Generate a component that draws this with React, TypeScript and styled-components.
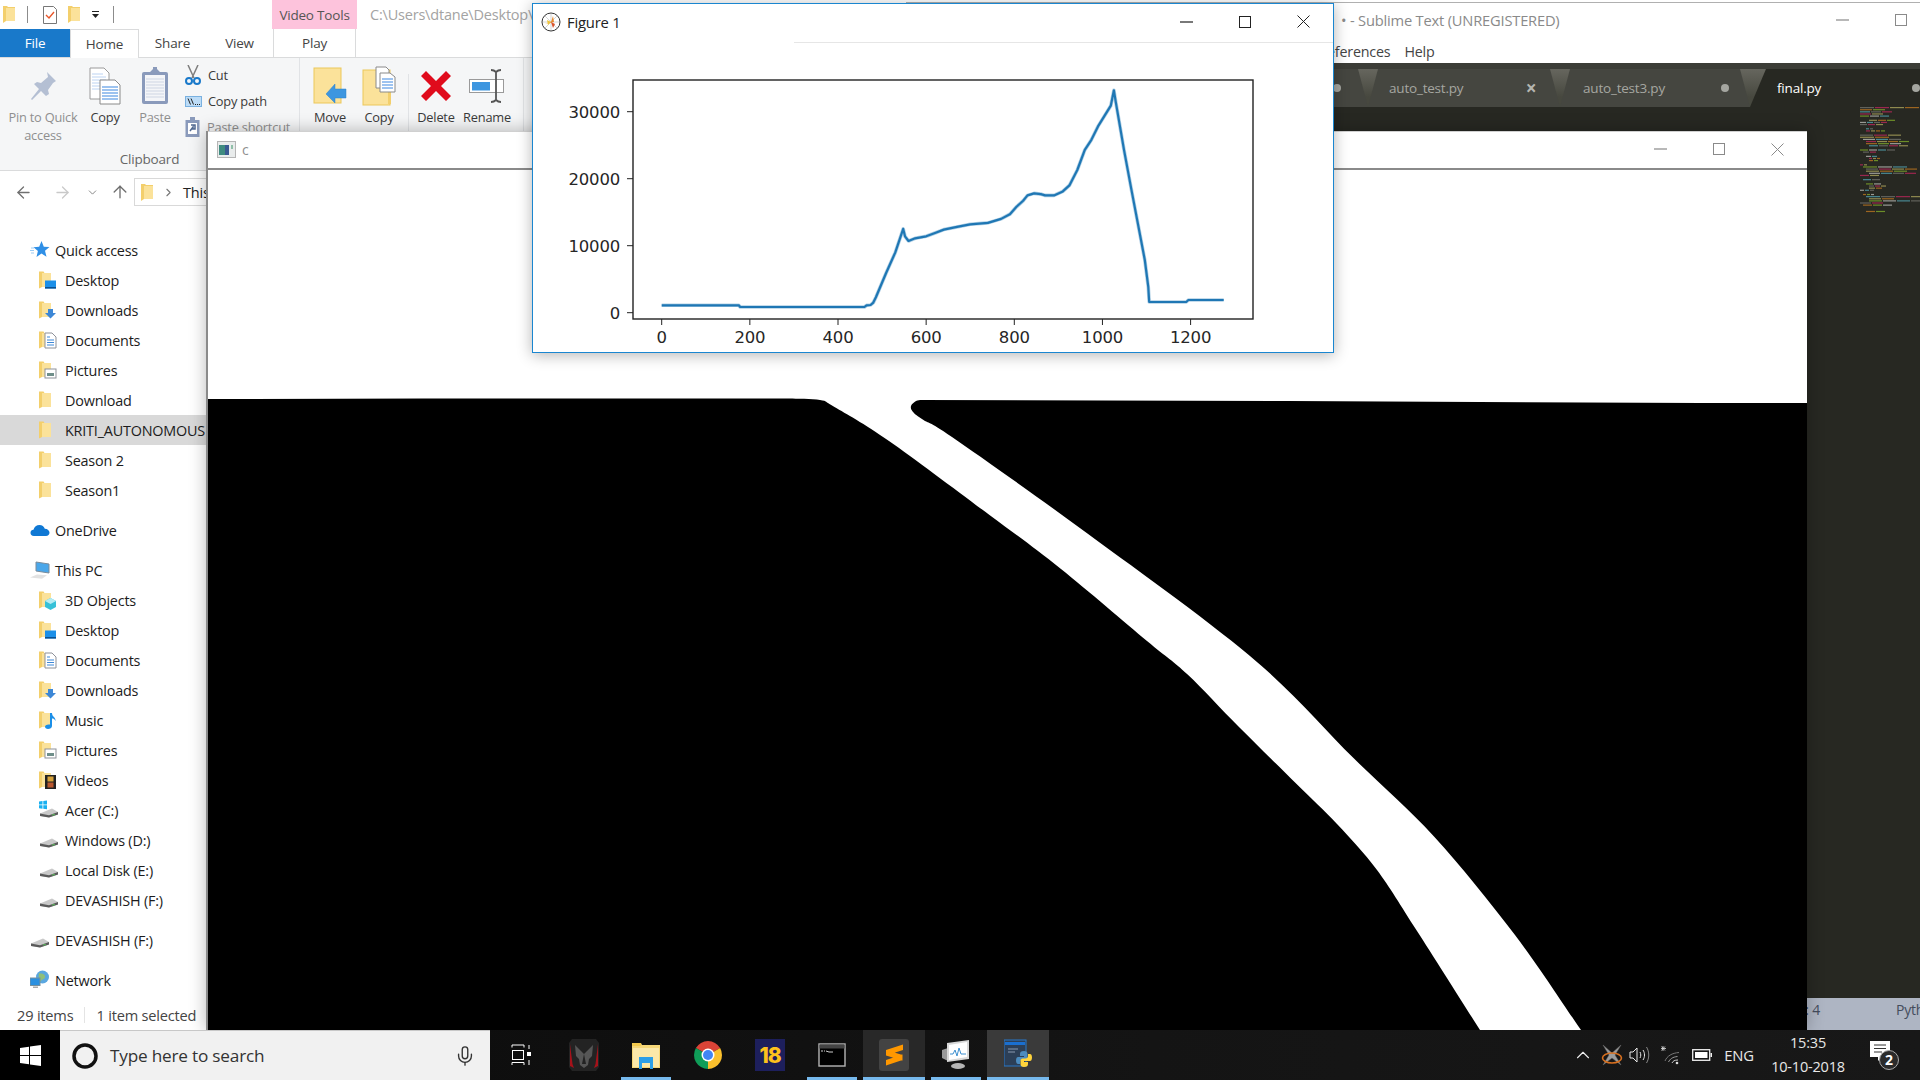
import React from "react";
import styled, { createGlobalStyle } from "styled-components";
import { ArrowLeft, ArrowRight, ArrowUp, ChevronDown, ChevronRight, ChevronUp, Mic } from "lucide-react";

const Global = createGlobalStyle`
  html, body { margin: 0; padding: 0; background: #000; }
  * { box-sizing: border-box; }
  #root { width: 1920px; height: 1080px; overflow: hidden; }
`;

const UI = `"Open Sans", "Noto Sans", sans-serif`;

const Screen = styled.div`
  width: 1920px; height: 1080px; display: flex; flex-direction: column; overflow: hidden;
  font-family: ${UI}; letter-spacing: -0.2px;
`;
const Desktop = styled.div`position: relative; flex: 1; overflow: hidden; background: #fff;`;

/* ------ Explorer ------ */
const Explorer = styled.section`
  position: absolute; left: 0; top: 0; width: 900px; height: 1030px;
  display: flex; flex-direction: column; background: #fff; z-index: 1;
`;
const ExplorerTitle = styled.div`height: 29px; display: flex; align-items: stretch; flex: none;`;
const Qat = styled.div`width: 272px; display: flex; align-items: center; padding-left: 3px;`;
const QatSep = styled.i`width: 1px; height: 17px; background: #8c8c8c; margin: 0 15px 0 11px;`;
const QatSep2 = styled(QatSep)`margin: 0 0 0 14px;`;
const QatGap = styled.span`width: 11px; flex: none;`;
const ContextLabel = styled.div`
  width: 85px; background: #fdc3dc; color: #555; font-size: 13.5px;
  display: flex; align-items: center; justify-content: center;
`;
const PathText = styled.div`
  margin-left: 13px; width: 162px; overflow: hidden; color: #a3a3a3; font-size: 14.5px; line-height: 29px; white-space: nowrap;
`;
const RibbonTabs = styled.div`
  height: 29px; display: flex; flex: none; border-bottom: 1px solid #dadbdc;
`;
const RTab = styled.div<{ $w: number; $kind?: "file" | "home" | "ctx" }>`
  width: ${(p) => p.$w}px; height: ${(p) => (p.$kind === "home" ? 29 : 28)}px;
  display: flex; align-items: center; justify-content: center; font-size: 13.5px; color: #444;
  ${(p) => p.$kind === "file" && "background:#1979ca;color:#fff;"}
  ${(p) => p.$kind === "home" && "border:1px solid #dadbdc;border-bottom:none;background:#fff;"}
  ${(p) => p.$kind === "ctx" && "border-left:1px solid #dadbdc;border-right:1px solid #dadbdc;"}
`;
const Ribbon = styled.div`
  height: 113px; flex: none; background: #f5f6f7; border-bottom: 1px solid #dadbdc; display: flex; overflow: hidden;
`;
const RGroup = styled.div<{ $w: number }>`
  width: ${(p) => p.$w}px; flex: none; display: flex; flex-direction: column; height: 100%;
  border-right: 1px solid #e1e3e6;
`;
const RItems = styled.div`flex: 1; display: flex; min-height: 0;`;
const RLabel = styled.div`
  flex: none; height: 22px; text-align: center; font-size: 13.5px; color: #666; line-height: 22px;
`;
const RBtn = styled.div<{ $w: number; $dim?: boolean }>`
  width: ${(p) => p.$w}px; flex: none; display: flex; flex-direction: column; align-items: center;
  font-size: 12.8px; line-height: 18px; text-align: center;
  color: ${(p) => (p.$dim ? "#8f8f8f" : "#3a3a3a")};
`;
const RIcon = styled.div`
  height: 50px; padding-top: 5px; display: flex; align-items: center; justify-content: center; flex: none;
`;
const RSmallCol = styled.div`display: flex; flex-direction: column; padding: 4px 0 0 3px;`;
const RSmall = styled.div<{ $dim?: boolean }>`
  height: 26px; display: flex; align-items: center; gap: 6px; font-size: 12.8px; white-space: nowrap;
  color: ${(p) => (p.$dim ? "#8f8f8f" : "#3a3a3a")};
`;
const RDivider = styled.i`width: 1px; height: 60px; margin: 16px 1px 0 6px; background: #e1e3e6; flex: none;`;

const AddressRow = styled.div`height: 64px; flex: none; display: flex; align-items: flex-start; padding-top: 7px;`;
const NavCell = styled.div<{ $w: number; $c: string }>`
  width: ${(p) => p.$w}px; height: 28px; display: flex; align-items: center; justify-content: center; color: ${(p) => p.$c};
`;
const AddressBox = styled.div`
  width: 400px; height: 28px; border: 1px solid #d9d9d9; display: flex; align-items: center; gap: 8px;
  padding-left: 6px; font-size: 14.5px; color: #222;
`;
const NavList = styled.nav`flex: 1; display: flex; flex-direction: column; min-height: 0;`;
const NavRow = styled.div<{ $level: 1 | 2; $sel?: boolean; $gap?: boolean }>`
  height: 30px; flex: none; display: flex; align-items: center; white-space: nowrap;
  font-size: 14.4px; color: #1c1c1c;
  padding-left: ${(p) => (p.$level === 1 ? 30 : 39)}px;
  margin-top: ${(p) => (p.$gap ? 10 : 0)}px;
  background: ${(p) => (p.$sel ? "#d9d9d9" : "transparent")};
`;
const NavIcon = styled.span<{ $level: 1 | 2 }>`
  width: ${(p) => (p.$level === 1 ? 25 : 26)}px; height: 20px; flex: none; display: block;
`;
const StatusRow = styled.footer`
  height: 30px; flex: none; display: flex; align-items: center; padding-left: 17px; font-size: 14.6px; color: #444;
`;
const StatusSep = styled.i`width: 1px; height: 16px; background: #e4e4e4; margin: 0 11px 0 11px;`;

/* ------ Sublime ------ */
const Sublime = styled.section`
  position: absolute; left: 906px; top: 2px; width: 1083px; height: 1028px;
  display: flex; flex-direction: column; background: #fff; border-top: 1px solid #b0b0b0; z-index: 2;
`;
const SubTitle = styled.div`height: 34px; flex: none; display: flex; align-items: center; padding-left: 435px;`;
const SubTitleText = styled.div`font-size: 14.7px; color: #8a8a8a; flex: 1; white-space: nowrap;`;
const SubMenu = styled.div`
  height: 26px; padding-top: 2px; flex: none; display: flex; align-items: center; gap: 14px; padding-left: 407px;
  font-size: 14.3px; color: #444;
`;
const TabStrip = styled.div`
  height: 44px; flex: none; padding: 6px 0 0 262px; display: flex; align-items: stretch;
  background: linear-gradient(#3c3d37 0 6px, #66665e 6px, #47483f 34px);
`;
const STab = styled.div<{ $w: number; $active?: boolean; $pl: number; $pr: number }>`
  width: ${(p) => p.$w}px; flex: none; display: flex; align-items: center; justify-content: space-between;
  padding: 0 ${(p) => p.$pr}px 0 ${(p) => p.$pl}px; font-size: 13.5px;
  background: ${(p) => (p.$active ? "#272822" : "#454640")};
  color: ${(p) => (p.$active ? "#fff" : "#a5a6a0")};
  clip-path: polygon(0 100%, ${(p) => (p.$active ? 16 : 10)}px 0, calc(100% - 10px) 0, 100% 100%);
`;
const SDot = styled.i`width: 8px; height: 8px; border-radius: 50%; background: #a5a6a0; flex: none;`;
const SClose = styled.span`font-size: 19px; font-weight: 700; color: #b5b6b0; width: 12px; text-align: center; line-height: 1;`;
const Editor = styled.div`flex: 1; background: #272822; display: flex; padding-left: 954px; align-items: flex-start; min-height: 0;`;
const SubStatus = styled.div`
  height: 32px; flex: none; background: #aeb5c3; display: flex; align-items: flex-start; padding-top: 2px;
  font-size: 14px; color: #444c5c;
`;
const SubStatusLeft = styled.span`width: 914px; text-align: right;`;
const SubStatusRight = styled.span`margin-left: 76px;`;

/* ------ Generic window bits ------ */
const Controls = styled.div`display: flex; flex: none;`;
const Ctl = styled.div`width: 58.5px; display: flex; align-items: center; justify-content: center;`;

/* ------ cv window ------ */
const CvWindow = styled.section`
  position: absolute; left: 206px; top: 131px; width: 1601px; height: 899px; background: #fff; z-index: 3;
  display: flex; flex-direction: column; border-left: 2px solid #8a8a8a;
  box-shadow: 0 0 16px rgba(0,0,0,.28);
`;
const CvTitle = styled.div`
  height: 39px; flex: none; display: flex; align-items: center; padding: 0 0 2px 9px; gap: 6px;
  border-bottom: 2px solid #8a8a8a; border-top: 1px solid #d0d0d0; font-size: 14px; color: #8f8f8f;
`;
const Grow = styled.div`flex: 1;`;
const CanvasSvg = styled.svg`display: block; flex: 1; width: 1599px; height: 860px;`;

/* ------ figure ------ */
const FigureWindow = styled.section`
  position: absolute; left: 532px; top: 3px; width: 802px; height: 350px; background: #fff; z-index: 4;
  border: 1px solid #1a86d0; display: flex; flex-direction: column;
  box-shadow: 0 2px 14px rgba(0,0,0,.3);
`;
const FigTitle = styled.div`
  height: 39px; flex: none; display: flex; align-items: center; padding: 0 0 4px 8px; gap: 6px;
  font-size: 14.8px; color: #222; position: relative;
`;
const FigRule = styled.i`position: absolute; left: 261px; right: 0; bottom: 0; height: 1px; background: #e6e6e6;`;
const ChartSvg = styled.svg`display: block; width: 800px; height: 309px; flex: none;`;

/* ------ taskbar ------ */
const Taskbar = styled.footer`
  height: 50px; flex: none; display: flex; background: linear-gradient(90deg,#0a0a0a,#141414 60%,#181818); color: #fff;
  position: relative; z-index: 6;
`;
const Start = styled.div`width: 60px; display: flex; align-items: center; justify-content: center; background: #000; flex: none;`;
const Search = styled.div`
  width: 430px; flex: none; background: #f1f1f1; border-top: 1px solid #c8c8c8; display: flex; align-items: center;
  padding: 0 14px 0 11px; gap: 11px; color: #333; font-size: 17.2px;
`;
const SearchText = styled.div`flex: 1;`;
const TaskView = styled.div`width: 63px; flex: none; display: flex; align-items: center; justify-content: center;`;
const TaskCell = styled.div<{ $run?: boolean; $bg?: string }>`
  width: 62px; flex: none; position: relative; display: flex; align-items: center; justify-content: center;
  background: ${(p) => p.$bg ?? "transparent"};
  &::after {
    content: ""; display: ${(p) => (p.$run ? "block" : "none")}; position: absolute; bottom: 0;
    left: ${(p) => (p.$bg ? 0 : 6)}px; right: ${(p) => (p.$bg ? 0 : 6)}px; height: 3px; background: #76b9ed;
  }
`;
const Tray = styled.div`margin-left: auto; width: 352px; flex: none; display: flex; align-items: stretch;`;
const TrayCell = styled.div<{ $w: number }>`
  width: ${(p) => p.$w}px; flex: none; display: flex; align-items: center; justify-content: center;
  font-size: 14.8px; color: #e8e8e8;
`;
const Clock = styled.div`
  width: 96px; flex: none; display: flex; flex-direction: column; align-items: center; justify-content: center;
  font-size: 14.5px; line-height: 24px; color: #e8e8e8;
`;
const Notif = styled.div`width: 64px; flex: none; display: flex; align-items: center; padding-left: 13px;`;
const EighteenBox = styled.div`
  width: 30px; height: 32px; background: #1d1f5c; color: #fdc21c; display: flex; align-items: center; justify-content: center;
  font: 800 21px "Inter", "Liberation Sans", sans-serif; letter-spacing: -1px;
`;

/* ------ icons ------ */
type Ov = "none" | "desktop" | "down" | "doc" | "pic" | "cube" | "music" | "film";
const Overlay = ({ k }: { k: Ov }) => {
  switch (k) {
    case "desktop":
      return (<g><rect x="6" y="10.5" width="11" height="8" fill="#1b8fe8" /><rect x="6" y="17" width="11" height="1.5" fill="#0b4f8e" /></g>);
    case "down":
      return (<path d="M9 9h5v4h3l-5.500 5.500L6 13h3z" fill="#3d87d6" />);
    case "doc":
      return (<g><path d="M6 3h7l4 4v11H6z" fill="#fff" stroke="#8e9199" /><path d="M8 7h3M8 10h7M8 12.500h7M8 15h7" stroke="#3d87d6" /></g>);
    case "pic":
      return (<g><rect x="6" y="9" width="11" height="9" fill="#fff" stroke="#8e9199" /><path d="M8 13h7v3H8z" fill="#6f8f8a" /></g>);
    case "cube":
      return (<g><path d="M11.500 8l5.500 3v6l-5.500 3L6 17v-6z" fill="#37c1d8" /><path d="M6 11l5.500 3 5.500-3-5.500-3z" fill="#b6ecf3" /></g>);
    case "music":
      return (<path d="M11 3h2c0 4 4 4 3.500 8-1-2-2-2.500-3.500-2.500V16c0 2-2 3-4 3s-3-1-3-2.200S7.500 14 11 14.500z" fill="#1b8fe8" />);
    case "film":
      return (<g><rect x="6" y="5" width="11" height="14" fill="#222" /><rect x="8.500" y="6.500" width="6" height="5" fill="#d7a23a" /><rect x="8.500" y="12.500" width="6" height="5" fill="#b9572f" /></g>);
    default:
      return null;
  }
};
const Folder = ({ k = "none" }: { k?: Ov }) => (
  <svg width="20" height="20" viewBox="0 0 20 20" style={{ display: "block" }}>
    <path d="M0 1.500h4.500L5.500 3H12v14H3l-3 1.500z" fill="#f3cf6c" />
    <path d="M3 3h9v14H3z" fill="#fbe29a" />
    <Overlay k={k} />
  </svg>
);
const Drive = ({ win }: { win?: boolean }) => (
  <svg width="20" height="20" viewBox="0 0 20 20" style={{ display: "block" }}>
    <path d="M1 13.500L13 8.500l6 3.500v2.500l-9 3-9-1.500z" fill="#c9c9c9" />
    <path d="M1 13.500l9 1.800 9-3.300v2.500l-9 3-9-1.500z" fill="#5b5b5b" />
    <rect x="13" y="14.300" width="3" height="1" fill="#58c05a" />
    {win && <path d="M0 1.500l3.500-.5v3.500H0zM4.300 1L8 .4v4H4.300zM0 5.300h3.500v3.400L0 8.200zM4.300 5.300H8v4l-3.700-.5z" fill="#19b0f0" />}
  </svg>
);
const StarIcon = () => (
  <svg width="20" height="20" viewBox="0 0 20 20" style={{ display: "block" }}>
    <path d="M11.500 1l2.300 5.700 5.700.4-4.500 3.700 1.500 6L11.500 13.500 6.500 17l1.400-6L3.500 7.200l5.700-.4z" fill="#2f8fe6" />
    <path d="M1 8h3M0 10.500h4M1 13h3" stroke="#9ccbf3" strokeWidth="1" />
  </svg>
);
const Cloud = () => (
  <svg width="20" height="20" viewBox="0 0 20 20" style={{ display: "block" }}>
    <path d="M4 16c-2.500 0-3.500-1.700-3.500-3.300C.5 11 2 9.700 3.500 9.800 4.300 7 6.500 5 9.500 5c2.700 0 4.500 1.500 5.300 3.700 2.700 0 4.700 1.800 4.700 3.900 0 2-1.500 3.400-3.500 3.400z" fill="#0f78d4" />
  </svg>
);
const PcIcon = () => (
  <svg width="22" height="20" viewBox="0 0 22 20" style={{ display: "block" }}>
    <path d="M6 2l13 2v9L6 11z" fill="#4aa7ea" stroke="#7b8b9a" />
    <path d="M0 17.500l7-3 10 .8-5 3.500z" fill="#e2e2e2" />
  </svg>
);
const NetIcon = () => (
  <svg width="20" height="20" viewBox="0 0 20 20" style={{ display: "block" }}>
    <circle cx="12.500" cy="7" r="6.500" fill="#5aa7e0" />
    <path d="M9 3c2 1 5 0 6 3s-3 3-4 5-3-4-2-8z" fill="#8fbf7a" />
    <rect x="0" y="8" width="10" height="7.500" fill="#2b90e0" stroke="#78909c" />
    <rect x="3" y="16.500" width="5" height="1.500" fill="#aaa" />
  </svg>
);
const Min = ({ c = "#222" }: { c?: string }) => (<svg width="13" height="2" viewBox="0 0 13 2"><rect width="13" height="1.200" y=".4" fill={c} /></svg>);
const Max = ({ c = "#222" }: { c?: string }) => (<svg width="12" height="12" viewBox="0 0 12 12"><rect x=".5" y=".5" width="11" height="11" fill="none" stroke={c} /></svg>);
const Close = ({ c = "#222" }: { c?: string }) => (<svg width="13" height="13" viewBox="0 0 13 13"><path d="M.5.500l12 12M12.500.500l-12 12" stroke={c} strokeWidth="1" /></svg>);

const PinIcon = () => (
  <svg width="30" height="32" viewBox="0 0 30 32"><path d="M19 2l9 9-3 2-5 7 1 4-3 2-5-5-9 9-1-1 8-10-5-5 3-2 4 1 7-6z" fill="#b4bfd3" /></svg>
);
const DocsIcon = () => (
  <svg width="32" height="38" viewBox="0 0 32 38">
    <path d="M1 1h14l5 5v26H1z" fill="#fff" stroke="#9a9a9a" />
    <path d="M3 7h11M3 10h14M3 13h14M3 16h14M3 19h14M3 22h14" stroke="#bcd3f2" />
    <path d="M11 13h15l5 5v19H11z" fill="#fff" stroke="#8a8a8a" />
    <path d="M13 20h16M13 23h16M13 26h16M13 29h16M13 32h16" stroke="#3d87e0" strokeWidth="1.200" />
  </svg>
);
const PasteIcon = () => (
  <svg width="28" height="38" viewBox="0 0 28 38">
    <rect x="1" y="5" width="26" height="32" rx="2" fill="#8a9abb" />
    <rect x="4" y="8" width="20" height="26" fill="#f4f5f8" />
    <path d="M5 12h18M5 15h18M5 18h18M5 21h18M5 24h18M5 27h18M5 30h18" stroke="#ced5e3" />
    <path d="M9 5l3-3V0h4v2l3 3v3H9z" fill="#8a9abb" />
  </svg>
);
const CutIcon = () => (
  <svg width="16" height="20" viewBox="0 0 16 20" style={{ marginRight: 1 }}>
    <path d="M3 0l6 13M13 0L7 13" stroke="#7e7e7e" strokeWidth="1.500" />
    <circle cx="4" cy="16" r="3" fill="none" stroke="#1979ca" strokeWidth="2" />
    <circle cx="12" cy="16" r="3" fill="none" stroke="#1979ca" strokeWidth="2" />
  </svg>
);
const PathIcon = () => (
  <svg width="17" height="11" viewBox="0 0 17 11">
    <rect x=".5" y=".5" width="16" height="10" fill="#bcdcf7" stroke="#7ab1e0" />
    <path d="M3 2.500l2.500 6M6 2.500l2.500 6" stroke="#222" />
    <path d="M10 8.500h1M12 8.500h1M14 8.500h1" stroke="#222" />
  </svg>
);
const ShortcutIcon = () => (
  <svg width="16" height="20" viewBox="0 0 16 20" >
    <rect x=".5" y="3" width="14" height="17" fill="#8a9abb" /><rect x="3" y="6" width="9" height="11" fill="#fff" />
    <path d="M5 14l3-4v2h2V8H6" stroke="#526a92" fill="none" strokeWidth="1.500" />
    <rect x="5" y="0" width="5" height="4" fill="#8a9abb" />
  </svg>
);
const MoveIcon = () => (
  <svg width="34" height="38" viewBox="0 0 34 38">
    <rect x="1" y="1" width="27" height="35" fill="#fbe29a" stroke="#ecc75a" />
    <path d="M13 27l9-10v5h11v9H22v5z" fill="#3d96e0" stroke="#2f80c8" strokeWidth=".5" />
  </svg>
);
const CopyToIcon = () => (
  <svg width="34" height="40" viewBox="0 0 34 40">
    <rect x="1" y="4" width="27" height="35" fill="#fbe29a" stroke="#ecc75a" />
    <path d="M26 25c0-2 3-2 3 0v13h-3z" fill="#f3cf6c" />
    <path d="M14 1h10l3 3v18H14z" fill="#fff" stroke="#8a8a8a" />
    <path d="M18 7h10l5 4v15H18z" fill="#fff" stroke="#8a8a8a" />
    <path d="M20 13h11M20 16h11M20 19h11M20 22h11" stroke="#3d87e0" />
  </svg>
);
const DeleteIcon = () => (
  <svg width="32" height="32" viewBox="0 0 32 32"><path d="M6 1l10 10L26 1l5 5-10 10 10 10-5 5-10-10L6 31l-5-5 10-10L1 6z" fill="#e00b1c" /></svg>
);
const RenameIcon = () => (
  <svg width="36" height="34" viewBox="0 0 36 34">
    <rect x=".5" y="10.500" width="34" height="13" fill="#fff" stroke="#9a9a9a" />
    <rect x="3" y="13" width="18" height="8.500" fill="#3d96e0" />
    <path d="M22 1c3 0 4 1 5 2 1-1 2-2 5-2M27 3v28M22 33c3 0 4-1 5-2 1 1 2 2 5 2" stroke="#555" strokeWidth="1.800" fill="none" />
  </svg>
);
const ChecklistIcon = () => (
  <svg width="14" height="18" viewBox="0 0 14 18" style={{ display: "block" }}>
    <path d="M.5.500h10l3 3v14H.5z" fill="#fff" stroke="#777" />
    <path d="M3 9l3 3 5-6" fill="none" stroke="#e8562a" strokeWidth="1.400" />
  </svg>
);
const QatDrop = () => (
  <svg width="7" height="7" viewBox="0 0 7 7"><rect width="7" height="1" fill="#222" /><path d="M0 3h7L3.500 7z" fill="#222" /></svg>
);
const QatFolder = () => (
  <svg width="13" height="17" viewBox="0 0 13 17" style={{ display: "block" }}><path d="M0 0h4l1 1h7v14H3l-3 2z" fill="#f3cf6c" /><rect x="3" y="2" width="9" height="13" fill="#fbe29a" /></svg>
);
const CvIcon = () => (
  <svg width="19" height="17" viewBox="0 0 19 17" style={{ display: "block" }}>
    <rect x=".5" y=".5" width="18" height="16" fill="#e9ecec" stroke="#b5b5b5" />
    <rect x="2" y="4" width="10" height="10" fill="#3f8c80" /><rect x="8" y="4" width="4" height="10" fill="#3a5a92" /><rect x="14" y="4" width="2" height="4" fill="#8fbfa8" />
  </svg>
);
const FigIcon = () => (
  <svg width="20" height="20" viewBox="0 0 20 20" style={{ display: "block" }}>
    <circle cx="10" cy="10" r="9" fill="#fff" stroke="#333" />
    <path d="M2 10h16M10 2v16M4 4l12 12M16 4L4 16" stroke="#bbb" strokeWidth=".6" />
    <path d="M4 12l6-2 2-6 1 6z" fill="#e98a2b" /><path d="M10 10l2 6 2-4z" fill="#d9532c" /><path d="M6 8l4 2-3 3z" fill="#efc53a" />
  </svg>
);
const WinLogo = () => (
  <svg width="21" height="21" viewBox="0 0 21 21"><path d="M0 3l9-1.300V10H0zM10 1.500L21 0v10H10zM0 11h9v8.300L0 18zM10 11h11v10l-11-1.500z" fill="#fff" /></svg>
);
const Cortana = () => (
  <svg width="28" height="28" viewBox="0 0 28 28" style={{ flex: "none" }}>
    <circle cx="14" cy="14" r="11" fill="none" stroke="#111" strokeWidth="3.500" />
  </svg>
);
const TaskViewIcon = () => (
  <svg width="22" height="22" viewBox="0 0 22 22">
    <path d="M1 1h12v2.500M1 1v2.500M13 1" stroke="#fff" fill="none" />
    <rect x="1.500" y="6.500" width="11" height="9" fill="none" stroke="#fff" />
    <path d="M1 21v-2.500h12V21" stroke="#fff" fill="none" />
    <path d="M18 1v4M18 16v5" stroke="#fff" /><rect x="16" y="8" width="4" height="4" fill="#fff" />
  </svg>
);
const PredatorIcon = () => (
  <svg width="30" height="32" viewBox="0 0 30 32">
    <path d="M3 0h24l3 4v24l-3 4H3l-3-4V4z" fill="#232323" />
    <path d="M1 5l2.500 20 1.500 4-4-2zM29 5l-2.500 20-1.500 4 4-2z" fill="#a5121a" />
    <path d="M6 6l6 6 3 3 3-3 6-6-1 11-3 3-1 6-4 3-4-3-1-6-3-3z" fill="#565656" />
    <path d="M15 15l-2 10h4z" fill="#232323" />
  </svg>
);
const ExplorerIcon = () => (
  <svg width="28" height="27" viewBox="0 0 28 27">
    <path d="M0 1h9l1 2h18v23H0z" fill="#f6d777" /><rect x="0" y="1" width="9" height="3" fill="#f3c94d" />
    <rect x="1" y="6" width="26" height="19" fill="#fbe8a9" />
    <path d="M7 15h14v12h-3v-6h-8v6H7z" fill="#2c9fe8" />
  </svg>
);
const ChromeIcon = () => (
  <svg width="28" height="28" viewBox="0 0 28 28">
    <path d="M14 14L1.880 7A14 14 0 0 1 26.120 7Z" fill="#db4437" />
    <path d="M14 14L1.880 7A14 14 0 0 0 14 28Z" fill="#0f9d58" />
    <path d="M14 14L26.120 7A14 14 0 0 1 14 28Z" fill="#fbc02d" />
    <circle cx="14" cy="14" r="6.500" fill="#fff" /><circle cx="14" cy="14" r="5" fill="#4285f4" />
  </svg>
);
const CmdIcon = () => (
  <svg width="28" height="24" viewBox="0 0 28 24">
    <rect x="1" y="1" width="26" height="22" fill="#000" stroke="#b5b5b5" strokeWidth="1.400" />
    <rect x="1.500" y="1.500" width="25" height="4" fill="#444" />
    <path d="M3 8h2M6 8h1M8 8l3 1h4" stroke="#ccc" />
  </svg>
);
const SublimeIcon = () => (
  <svg width="30" height="32" viewBox="0 0 30 32">
    <rect width="30" height="32" rx="3" fill="#434343" />
    <path d="M24 5.500L7 11v5.500l17-5.500zM7 16.500l16.500 5v-5.500L7 11zM23.500 15.500L7 21v5.500l16.500-5.500z" fill="#ff9800" />
  </svg>
);
const MonitorIcon = () => (
  <svg width="28" height="30" viewBox="0 0 28 30">
    <path d="M0 10l6-2v13l-6-3z" fill="#999" />
    <path d="M5 3l22-3v19l-22 3z" fill="#d8d8d8" /><path d="M7 5l18-3v15L7 20z" fill="#fff" />
    <path d="M8 14l3 0 2-4 2 6 2-8 2 6h5" stroke="#3c8fd0" fill="none" />
    <ellipse cx="16" cy="26" rx="7" ry="3" fill="#b5b5b5" />
  </svg>
);
const PythonTaskIcon = () => (
  <svg width="28" height="32" viewBox="0 0 28 32">
    <rect x="0" y="1" width="22" height="26" fill="#2c3f57" stroke="#2979c9" />
    <rect x="1" y="3" width="20" height="3" fill="#1a6fd0" />
    <path d="M4 10h10M4 13h7" stroke="#8a9ab0" />
    <g transform="translate(12 12)">
      <path d="M8 0C5 0 4 1 4 3v2h4v1H2C1 6 0 7 0 9.500S1 13 2 13h2v-2c0-1.500 1-2.500 2.500-2.500h3c1 0 2-1 2-2V3c0-2-1-3-3.500-3z" fill="#4b8bbe" />
      <path d="M8 0C5 0 4 1 4 3v2h4v1H2C1 6 0 7 0 9.500S1 13 2 13h2v-2c0-1.500 1-2.500 2.500-2.500h3c1 0 2-1 2-2V3c0-2-1-3-3.500-3z" fill="#ffd43b" transform="rotate(180 8 8)" />
    </g>
  </svg>
);
const TrayApp = () => (
  <svg width="22" height="22" viewBox="0 0 22 22">
    <path d="M2 1l9 8 9-8-6 10 6 10-9-7-9 7 6-10z" fill="#9c9c9c" stroke="#666" strokeWidth=".5" />
    <ellipse cx="11" cy="14" rx="9.500" ry="5" fill="none" stroke="#d8701f" strokeWidth="1.600" />
  </svg>
);
const SpeakerIcon = () => (
  <svg width="22" height="18" viewBox="0 0 22 18" fill="none" stroke="#e8e8e8">
    <path d="M1 6h3l4-4v14l-4-4H1z" /><path d="M11 6c1 2 1 4 0 6M14 4c2 3 2 7 0 10" /><path d="M17.500 1c3 5 3 11 0 16" stroke="#8a8a8a" />
  </svg>
);
const WifiIcon = () => (
  <svg width="20" height="20" viewBox="0 0 20 20" fill="none" stroke="#cfcfcf">
    <path d="M4 16C6 11 11 8 18 7.500" stroke="#777" /><path d="M7.500 17c1.500-3 4-5 9-5.500" stroke="#999" /><path d="M11 18c1-2 2.500-3 6-3" />
    <circle cx="16" cy="18" r="1.300" fill="#ddd" stroke="none" />
    <path d="M2 1v5M0 3.500h5M.5 1.500l3.500 4M4 1.500L.5 5.500" stroke="#ddd" strokeWidth=".8" />
  </svg>
);
const BatteryIcon = () => (
  <svg width="20" height="12" viewBox="0 0 20 12">
    <rect x=".7" y=".7" width="17" height="10.600" fill="none" stroke="#eee" strokeWidth="1.300" /><rect x="3" y="3" width="12.500" height="6" fill="#fff" /><rect x="18.500" y="4" width="1.500" height="4" fill="#eee" />
  </svg>
);
const NotifIcon = () => (
  <svg width="31" height="31" viewBox="0 0 31 31">
    <path d="M1 1h20v16h-8l-4 4v-4H1z" fill="#fff" />
    <path d="M5 5h12M5 8.500h12M5 12h8" stroke="#333" />
    <circle cx="20" cy="20" r="9.500" fill="#2b2b2b" stroke="#aaa" />
    <text x="20" y="25" textAnchor="middle" fontSize="14" fontWeight="700" fill="#fff" fontFamily="Open Sans">2</text>
  </svg>
);

/* ------ data ------ */
const series: [number, number][] = [
  [0, 1100], [175, 1100], [178, 850], [460, 850], [465, 1100], [474, 1150], [480, 1500], [486, 2300], [509, 5900], [530, 9000],
  [548, 12500], [552, 11400], [560, 10700], [575, 11100], [600, 11400], [620, 11900], [640, 12400], [670, 12800], [700, 13200],
  [740, 13400], [770, 14000], [790, 14700], [805, 15800], [820, 16700], [830, 17500], [845, 17800], [860, 17700], [870, 17500],
  [890, 17500], [910, 18100], [925, 19000], [943, 21300], [960, 24300], [975, 25800], [990, 27800], [1019, 30900], [1026, 33200],
  [1030, 31500], [1049, 24300], [1066, 18300], [1096, 7860], [1104, 3800], [1106, 1600], [1190, 1600], [1195, 1900], [1275, 1900],
];
const px = (v: number) => 661.7 + v * 0.44075;
const py = (v: number) => 312.7 - v * 0.0067;
const linePts = series.map(([a, b]) => `${px(a).toFixed(1)},${py(b).toFixed(1)}`).join(" ");

type P = [number, number];
const smooth = (pts: P[]) => {
  let d = "";
  for (let i = 0; i < pts.length - 1; i++) {
    const p0 = pts[Math.max(0, i - 1)];
    const p1 = pts[i];
    const p2 = pts[i + 1];
    const p3 = pts[Math.min(pts.length - 1, i + 2)];
    const c1x = p1[0] + (p2[0] - p0[0]) / 6;
    const c1y = p1[1] + (p2[1] - p0[1]) / 6;
    const c2x = p2[0] - (p3[0] - p1[0]) / 6;
    const c2y = p2[1] - (p3[1] - p1[1]) / 6;
    d += `C${c1x.toFixed(1)} ${c1y.toFixed(1)} ${c2x.toFixed(1)} ${c2y.toFixed(1)} ${p2[0]} ${p2[1]} `;
  }
  return d;
};
const leftEdge: P[] = [
  [790, 398.5], [820, 400], [834.5, 407], [889, 441], [989.5, 515], [1061, 569], [1147, 641], [1187.6, 674.5],
  [1239, 727], [1296.6, 784], [1337, 824], [1377, 870], [1417, 931], [1480, 1030],
];
const rightEdge: P[] = [
  [1581, 1030], [1515, 935], [1434, 836.5], [1354, 758.6], [1250, 656], [1078.5, 527], [952, 437],
  [923.5, 420], [913, 412], [911, 406], [916, 401], [921, 400],
];
const leftBlack = `M207 1030 L207 399 L424 398.5 L790 398.5 ${smooth(leftEdge)}Z`;
const rightBlack = `M1581 1030 ${smooth(rightEdge)}L1290 401 L1700 403 L1807 403 L1807 1030 Z`;

const miniColors = ["#f92672", "#66d9ef", "#a6e22e", "#e6db74", "#8f908a", "#f8f8f2", "#fd971f"];
const miniRows = Array.from({ length: 50 }, (_, i) => {
  const seed = (i * 37 + 11) % 101;
  const blank = i % 7 === 5 || i % 13 === 9;
  const indent = i < 5 ? 0 : (seed % 4) * 3;
  const segs = blank ? [] : Array.from({ length: 2 + (seed % 3) }, (_, j) => ({
    w: 3 + ((seed + j * 13) % 13),
    c: miniColors[(seed + j * 3) % miniColors.length],
  }));
  return { indent, segs };
});

const Minimap = () => (
  <svg width="60" height="108" viewBox="0 0 60 108" style={{ display: "block", flex: "none" }}>
    {miniRows.map((r, i) => {
      let x = r.indent;
      return r.segs.map((s, j) => {
        const el = <rect key={`${i}-${j}`} x={x} y={i * 2.12} width={s.w} height="1.200" fill={s.c} opacity=".55" />;
        x += s.w + 1;
        return el;
      });
    })}
  </svg>
);

type Row = { t: string; lvl: 1 | 2; icon: React.ReactNode; sel?: boolean; gap?: boolean };
const rows: Row[] = [
  { t: "Quick access", lvl: 1, icon: <StarIcon /> },
  { t: "Desktop", lvl: 2, icon: <Folder k="desktop" /> },
  { t: "Downloads", lvl: 2, icon: <Folder k="down" /> },
  { t: "Documents", lvl: 2, icon: <Folder k="doc" /> },
  { t: "Pictures", lvl: 2, icon: <Folder k="pic" /> },
  { t: "Download", lvl: 2, icon: <Folder /> },
  { t: "KRITI_AUTONOMOUS", lvl: 2, icon: <Folder />, sel: true },
  { t: "Season 2", lvl: 2, icon: <Folder /> },
  { t: "Season1", lvl: 2, icon: <Folder /> },
  { t: "OneDrive", lvl: 1, icon: <Cloud />, gap: true },
  { t: "This PC", lvl: 1, icon: <PcIcon />, gap: true },
  { t: "3D Objects", lvl: 2, icon: <Folder k="cube" /> },
  { t: "Desktop", lvl: 2, icon: <Folder k="desktop" /> },
  { t: "Documents", lvl: 2, icon: <Folder k="doc" /> },
  { t: "Downloads", lvl: 2, icon: <Folder k="down" /> },
  { t: "Music", lvl: 2, icon: <Folder k="music" /> },
  { t: "Pictures", lvl: 2, icon: <Folder k="pic" /> },
  { t: "Videos", lvl: 2, icon: <Folder k="film" /> },
  { t: "Acer (C:)", lvl: 2, icon: <Drive win /> },
  { t: "Windows (D:)", lvl: 2, icon: <Drive /> },
  { t: "Local Disk (E:)", lvl: 2, icon: <Drive /> },
  { t: "DEVASHISH (F:)", lvl: 2, icon: <Drive /> },
  { t: "DEVASHISH (F:)", lvl: 1, icon: <Drive />, gap: true },
  { t: "Network", lvl: 1, icon: <NetIcon />, gap: true },
];

export default function App() {
  return (
    <Screen>
      <Global />
      <Desktop>
        <Explorer>
          <ExplorerTitle>
            <Qat>
              <QatFolder />
              <QatSep />
              <ChecklistIcon />
              <QatGap />
              <QatFolder />
              <QatGap />
              <QatDrop />
              <QatSep2 />
            </Qat>
            <ContextLabel>Video Tools</ContextLabel>
            <PathText>C:\Users\dtane\Desktop\</PathText>
          </ExplorerTitle>
          <RibbonTabs>
            <RTab $w={70} $kind="file">File</RTab>
            <RTab $w={69} $kind="home">Home</RTab>
            <RTab $w={67}>Share</RTab>
            <RTab $w={67}>View</RTab>
            <RTab $w={83} $kind="ctx">Play</RTab>
          </RibbonTabs>
          <Ribbon>
            <RGroup $w={300}>
              <RItems>
                <RBtn $w={78} $dim style={{ marginLeft: 4 }}><RIcon><PinIcon /></RIcon>Pin to Quick<br />access</RBtn>
                <RBtn $w={46}><RIcon><DocsIcon /></RIcon>Copy</RBtn>
                <RBtn $w={54} $dim><RIcon><PasteIcon /></RIcon>Paste</RBtn>
                <RSmallCol>
                  <RSmall><CutIcon />Cut</RSmall>
                  <RSmall><PathIcon />Copy path</RSmall>
                  <RSmall $dim><ShortcutIcon />Paste shortcut</RSmall>
                </RSmallCol>
              </RItems>
              <RLabel>Clipboard</RLabel>
            </RGroup>
            <RGroup $w={224}>
              <RItems>
                <RBtn $w={52} style={{ marginLeft: 4 }}><RIcon><MoveIcon /></RIcon>Move<br />to</RBtn>
                <RBtn $w={46}><RIcon><CopyToIcon /></RIcon>Copy<br />to</RBtn>
                <RDivider />
                <RBtn $w={52}><RIcon><DeleteIcon /></RIcon>Delete</RBtn>
                <RBtn $w={50}><RIcon><RenameIcon /></RIcon>Rename</RBtn>
              </RItems>
            </RGroup>
          </Ribbon>
          <AddressRow>
            <NavCell $w={46} $c="#6f6f6f"><ArrowLeft size={19} strokeWidth={1.6} /></NavCell>
            <NavCell $w={32} $c="#c9c9c9"><ArrowRight size={19} strokeWidth={1.6} /></NavCell>
            <NavCell $w={28} $c="#777"><ChevronDown size={13} strokeWidth={1.6} /></NavCell>
            <NavCell $w={28} $c="#6f6f6f"><ArrowUp size={20} strokeWidth={1.6} /></NavCell>
            <AddressBox>
              <QatFolder />
              <ChevronRight size={13} color="#777" />
              This PC
            </AddressBox>
          </AddressRow>
          <NavList>
            {rows.map((r, i) => (
              <NavRow key={i} $level={r.lvl} $sel={r.sel} $gap={r.gap}>
                <NavIcon $level={r.lvl}>{r.icon}</NavIcon>
                {r.t}
              </NavRow>
            ))}
            <Grow />
            <StatusRow>29 items<StatusSep />1 item selected</StatusRow>
          </NavList>
        </Explorer>

        <Sublime>
          <SubTitle>
            <SubTitleText>• - Sublime Text (UNREGISTERED)</SubTitleText>
            <Controls>
              <Ctl><Min c="#8a8a8a" /></Ctl>
              <Ctl><Max c="#8a8a8a" /></Ctl>
              <Ctl><Close c="#8a8a8a" /></Ctl>
            </Controls>
          </SubTitle>
          <SubMenu><span>Preferences</span><span>Help</span></SubMenu>
          <TabStrip>
            <STab $w={200} $pl={24} $pr={27}><span>test.py</span><SDot /></STab>
            <STab $w={192} $pl={21} $pr={23}><span>auto_test.py</span><SClose>×</SClose></STab>
            <STab $w={190} $pl={23} $pr={21}><span>auto_test3.py</span><SDot /></STab>
            <STab $w={190} $active $pl={27} $pr={20}><span>final.py</span><SDot /></STab>
          </TabStrip>
          <Editor><Minimap /></Editor>
          <SubStatus>
            <SubStatusLeft>Spaces: 4</SubStatusLeft>
            <SubStatusRight>Python</SubStatusRight>
          </SubStatus>
        </Sublime>

        <CvWindow>
          <CvTitle>
            <CvIcon />
            <span>c</span>
            <Grow />
            <Controls>
              <Ctl><Min c="#8a8a8a" /></Ctl>
              <Ctl><Max c="#8a8a8a" /></Ctl>
              <Ctl><Close c="#8a8a8a" /></Ctl>
            </Controls>
          </CvTitle>
          <CanvasSvg viewBox="208 170 1599 860" preserveAspectRatio="none">
            <path d={leftBlack} fill="#000" />
            <path d={rightBlack} fill="#000" />
          </CanvasSvg>
        </CvWindow>

        <FigureWindow>
          <FigTitle>
            <FigIcon />
            <span>Figure 1</span>
            <Grow />
            <Controls>
              <Ctl><Min /></Ctl>
              <Ctl><Max /></Ctl>
              <Ctl><Close /></Ctl>
            </Controls>
            <FigRule />
          </FigTitle>
          <ChartSvg viewBox="533 43 800 309">
            <rect x="633" y="80" width="620" height="239" fill="#fff" stroke="#222" strokeWidth="1.400" />
            {[0, 10000, 20000, 30000].map((v) => (
              <g key={v}>
                <line x1="627" x2="633" y1={py(v)} y2={py(v)} stroke="#222" />
                <text x="620" y={py(v) + 6} textAnchor="end" fontSize="16.5" fill="#262626" fontFamily="DejaVu Sans">{v}</text>
              </g>
            ))}
            {[0, 200, 400, 600, 800, 1000, 1200].map((v) => (
              <g key={v}>
                <line y1="319" y2="325" x1={px(v)} x2={px(v)} stroke="#222" />
                <text x={px(v)} y="343" textAnchor="middle" fontSize="16.5" fill="#262626" fontFamily="DejaVu Sans">{v}</text>
              </g>
            ))}
            <polyline points={linePts} fill="none" stroke="#1f77b4" strokeOpacity=".35" strokeWidth="3.600" strokeLinejoin="round" />
            <polyline points={linePts} fill="none" stroke="#1f77b4" strokeWidth="2.200" strokeLinejoin="round" />
          </ChartSvg>
        </FigureWindow>
      </Desktop>

      <Taskbar>
        <Start><WinLogo /></Start>
        <Search>
          <Cortana />
          <SearchText>Type here to search</SearchText>
          <Mic size={22} color="#333" strokeWidth={1.5} />
        </Search>
        <TaskView><TaskViewIcon /></TaskView>
        <TaskCell><PredatorIcon /></TaskCell>
        <TaskCell $run><ExplorerIcon /></TaskCell>
        <TaskCell><ChromeIcon /></TaskCell>
        <TaskCell><EighteenBox>18</EighteenBox></TaskCell>
        <TaskCell $run><CmdIcon /></TaskCell>
        <TaskCell $run $bg="#282828"><SublimeIcon /></TaskCell>
        <TaskCell $run><MonitorIcon /></TaskCell>
        <TaskCell $run $bg="#3a3a3a"><PythonTaskIcon /></TaskCell>
        <Tray>
          <TrayCell $w={30}><ChevronUp size={22} strokeWidth={1.2} color="#eee" /></TrayCell>
          <TrayCell $w={27}><TrayApp /></TrayCell>
          <TrayCell $w={30}><SpeakerIcon /></TrayCell>
          <TrayCell $w={31}><WifiIcon /></TrayCell>
          <TrayCell $w={32}><BatteryIcon /></TrayCell>
          <TrayCell $w={42}>ENG</TrayCell>
          <Clock><span>15:35</span><span>10-10-2018</span></Clock>
          <Notif><NotifIcon /></Notif>
        </Tray>
      </Taskbar>
    </Screen>
  );
}
